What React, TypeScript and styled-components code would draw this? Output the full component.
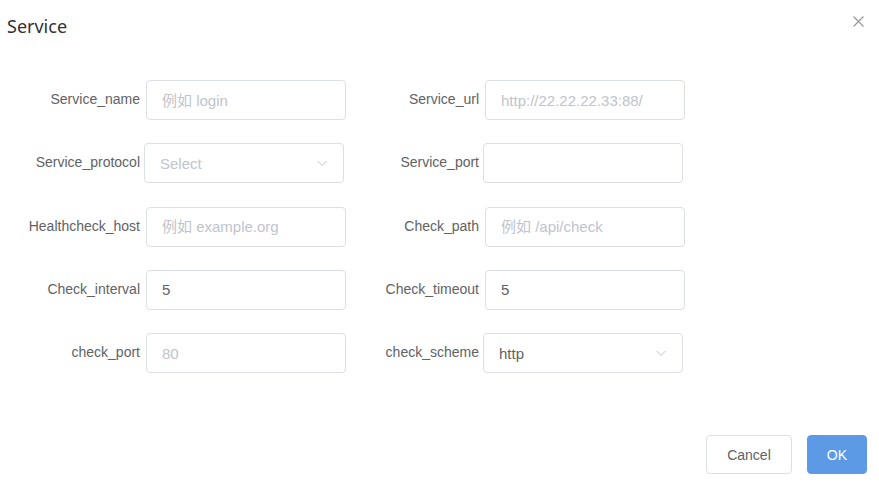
import React from "react";
import styled, { createGlobalStyle } from "styled-components";

const Global = createGlobalStyle`
  html, body { margin: 0; padding: 0; background: #fff; }
  body { font-family: "Liberation Sans", Arial, "Noto Sans CJK SC", sans-serif; }
  * { box-sizing: border-box; }
`;

const Dialog = styled.div`
  position: relative;
  width: 879px;
  height: 492px;
  background: #fff;
  display: flex;
  flex-direction: column;
`;

const Header = styled.div`
  padding: 14px 0 0 7px;
  height: 80px;
`;

const Title = styled.div`
  font-family: "Noto Sans", "Open Sans", sans-serif;
  font-size: 18px;
  line-height: 24px;
  color: #303133;
`;

const Close = styled.button`
  position: absolute;
  top: 15px;
  right: 15px;
  width: 12px;
  height: 12px;
  padding: 0;
  border: none;
  background: none;
  cursor: pointer;
  display: flex;
  align-items: center;
  justify-content: center;
`;

const Form = styled.div`
  display: grid;
  grid-template-columns: 146px 200px 139px 200px;
  grid-auto-rows: 40px;
  row-gap: 23.25px;
`;

const Label = styled.label`
  font-size: 14px;
  color: #606266;
  line-height: 38px;
  text-align: right;
  padding-right: 6px;
  white-space: nowrap;
`;

const Field = styled.div<{ $shift?: number }>`
  position: relative;
  width: 200px;
  height: 40px;
  margin-left: ${(p) => p.$shift ?? 0}px;
  border: 1px solid #dcdfe6;
  border-radius: 4px;
  display: flex;
  align-items: center;
  padding: 0 15px;
  font-size: 15px;
  color: #606266;
  background: #fff;
`;

const Input = styled.input`
  width: 100%;
  border: none;
  outline: none;
  padding: 0;
  font-family: "Liberation Sans", Arial, "Noto Sans CJK SC", sans-serif;
  font-size: 15px;
  color: #606266;
  background: transparent;
  &::placeholder { color: #c0c4cc; }
`;

const SelectText = styled.span<{ $placeholder?: boolean }>`
  flex: 1;
  color: ${(p) => (p.$placeholder ? "#c0c4cc" : "#606266")};
`;

const Chevron = styled.svg`
  width: 12px;
  height: 12px;
  flex: none;
`;

const Footer = styled.div`
  margin-top: auto;
  display: flex;
  justify-content: flex-end;
  gap: 15px;
  padding: 0 12px 18px 0;
`;

const Button = styled.button<{ $primary?: boolean }>`
  height: 39px;
  padding: 0 ${(p) => (p.$primary ? 19 : 20)}px;
  font-family: "Liberation Sans", Arial, sans-serif;
  font-size: 14px;
  border-radius: 4px;
  border: 1px solid ${(p) => (p.$primary ? "#5d9ae6" : "#dcdfe6")};
  background: ${(p) => (p.$primary ? "#5d9ae6" : "#fff")};
  color: ${(p) => (p.$primary ? "#fff" : "#606266")};
  cursor: pointer;
`;

const ChevronIcon = () => (
  <Chevron viewBox="0 0 12 12">
    <path d="M1.5 4 L6 8.5 L10.5 4" fill="none" stroke="#c0c4cc" strokeWidth="1" />
  </Chevron>
);

const TextField = ({ placeholder, value, shift }: { placeholder?: string; value?: string; shift?: number }) => (
  <Field $shift={shift}>
    <Input placeholder={placeholder} defaultValue={value} />
  </Field>
);

const SelectField = ({ text, placeholder, shift }: { text: string; placeholder?: boolean; shift?: number }) => (
  <Field $shift={shift}>
    <SelectText $placeholder={placeholder}>{text}</SelectText>
    <ChevronIcon />
  </Field>
);

export default function App() {
  return (
    <>
      <Global />
      <Dialog>
        <Header>
          <Title>Service</Title>
        </Header>
        <Close aria-label="close">
          <svg width="11" height="11" viewBox="0 0 11 11">
            <path d="M0.5 0.5 L10.5 10.5 M10.5 0.5 L0.5 10.5" stroke="#909399" strokeWidth="1.1" />
          </svg>
        </Close>
        <Form>
          <Label>Service_name</Label>
          <TextField placeholder="例如 login" />
          <Label>Service_url</Label>
          <TextField placeholder="http://22.22.22.33:88/" />

          <Label>Service_protocol</Label>
          <SelectField text="Select" placeholder shift={-2} />
          <Label>Service_port</Label>
          <TextField shift={-2} />

          <Label>Healthcheck_host</Label>
          <TextField placeholder="例如 example.org" />
          <Label>Check_path</Label>
          <TextField placeholder="例如 /api/check" />

          <Label>Check_interval</Label>
          <TextField value="5" />
          <Label>Check_timeout</Label>
          <TextField value="5" />

          <Label>check_port</Label>
          <TextField placeholder="80" />
          <Label>check_scheme</Label>
          <SelectField text="http" shift={-2} />
        </Form>
        <Footer>
          <Button>Cancel</Button>
          <Button $primary>OK</Button>
        </Footer>
      </Dialog>
    </>
  );
}
